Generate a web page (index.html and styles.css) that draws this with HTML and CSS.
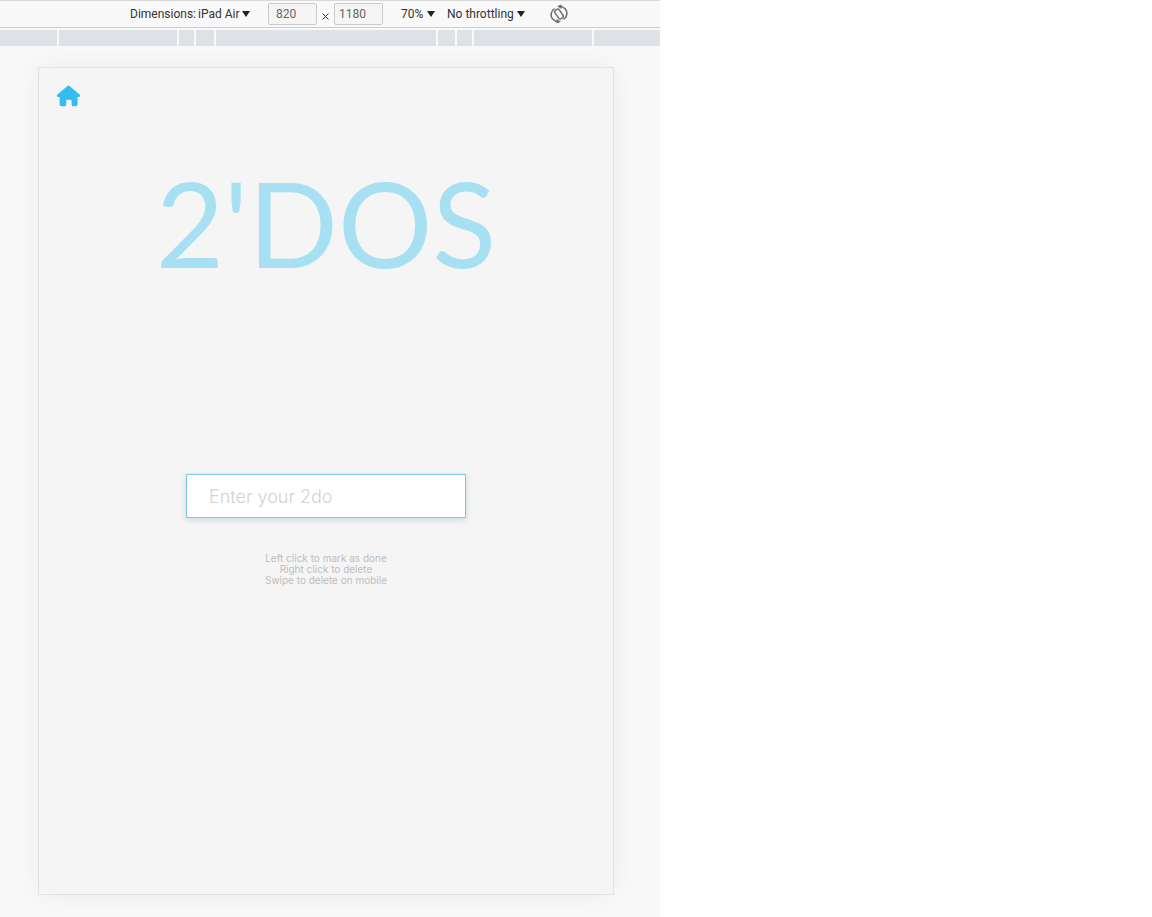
FILE: index.html
```html
<!DOCTYPE html>
<html lang="en">
<head>
<meta charset="utf-8">
<title>2'DOS</title>
<link rel="stylesheet" href="styles.css">
</head>
<body>
<div class="workspace">
  <section class="preview">
    <div class="toolbar">
      <label class="picker picker-device">Dimensions:
        <select><option>iPad Air</option></select>
        <svg class="caret" viewBox="0 0 8 6" aria-hidden="true"><path d="M0 0h8L4 6z"/></svg>
      </label>
      <div class="size">
        <input class="size-field size-width" type="text" value="820" aria-label="Width">
        <svg class="times" viewBox="0 0 7 7" role="img" aria-label="by"><path d="M.5.5l6 6M6.500.5l-6 6"/></svg>
        <input class="size-field" type="text" value="1180" aria-label="Height">
      </div>
      <label class="picker picker-zoom">
        <select aria-label="Zoom"><option>70%</option></select>
        <svg class="caret" viewBox="0 0 8 6" aria-hidden="true"><path d="M0 0h8L4 6z"/></svg>
      </label>
      <label class="picker picker-throttle">
        <select aria-label="Throttling"><option>No throttling</option></select>
        <svg class="caret" viewBox="0 0 8 6" aria-hidden="true"><path d="M0 0h8L4 6z"/></svg>
      </label>
      <button class="rotate" type="button" aria-label="Rotate">
        <svg viewBox="0 0 20 20" aria-hidden="true">
          <rect x="7.400" y="5" width="5.200" height="10" rx="1.800" transform="rotate(-35 10 10)"/>
          <path d="M10 2.200C15 2.200 18.600 6 17.800 10.500C17.400 12.800 16.300 14.200 14.500 15.500M10 17.800C5 17.800 1.400 14 2.200 9.500C2.600 7.200 3.700 5.800 5.500 4.500"/>
          <path class="tip" d="M8 2.200L12.500.6V5zM12 17.800L7.500 19.400V15z"/>
        </svg>
      </button>
    </div>
    <div class="ruler">
      <span></span><span></span><span></span><span></span><span></span><span></span><span></span><span></span><span></span>
    </div>
    <main class="device">
      <a class="home" href="#" aria-label="Home">
        <svg viewBox="0 0 26 22" aria-hidden="true"><path d="M11.900.6Q13-.4 14.100.6L24.800 9.800Q25.800 11.500 24.200 12H22.400V19.800Q22.400 21.600 20.600 21.600H17.800Q16.200 21.600 16.200 20V16Q16.200 14.800 15 14.800H11.800Q10.600 14.800 10.600 16V20Q10.600 21.600 9 21.600H5.600Q3.800 21.600 3.800 19.800V12H1.800Q.2 11.500 1.200 9.800Z"/></svg>
      </a>
      <h1 class="title">2'DOS</h1>
      <input class="entry" type="text" placeholder="Enter your 2do" aria-label="New item">
      <p class="hints">Left click to mark as done<br>Right click to delete<br>Swipe to delete on mobile</p>
    </main>
  </section>
</div>
</body>
</html>
```

FILE: styles.css
```css
* {
  box-sizing: border-box;
}

body {
  margin: 0;
  background: #fff;
  font-family: Roboto, "Open Sans", sans-serif;
}

.workspace {
  display: grid;
  grid-template-columns: 55fr 41fr;
  min-height: 100vh;
}

.preview {
  display: flex;
  flex-direction: column;
  background: #f9f9f9;
}

.toolbar {
  display: flex;
  align-items: center;
  height: 28px;
  padding-left: 130px;
  border-top: 1px solid #d8d8d8;
  border-bottom: 1px solid #c9cbce;
  color: #333;
  font-size: 12px;
  white-space: nowrap;
}

.picker {
  display: flex;
  align-items: center;
  gap: 3px;
}

.picker select {
  appearance: none;
  padding: 0;
  border: 0;
  background: transparent;
  color: inherit;
  font: inherit;
}

.picker-device {
  gap: 2px;
}

.caret {
  width: 8px;
  height: 6px;
  fill: #222;
}

.size {
  display: flex;
  align-items: center;
  gap: 5px;
  margin: 0 18px;
}

.size-field {
  width: 49px;
  height: 22px;
  padding: 0 4px;
  border: 1px solid #cacaca;
  border-radius: 2px;
  background: #f5f5f5;
  color: #666;
  font: inherit;
}

.size-width {
  padding-left: 7px;
}

.times {
  width: 7px;
  height: 7px;
  margin-top: 4px;
  stroke: #333;
}

.picker-throttle {
  margin-left: 12px;
}

.rotate {
  display: flex;
  margin-left: 24px;
  padding: 0;
  border: 0;
  background: none;
}

.rotate svg {
  width: 20px;
  height: 20px;
  fill: none;
  stroke: #6e6e6e;
  stroke-width: 1.500;
}

.rotate .tip {
  fill: #6e6e6e;
  stroke: none;
}

.ruler {
  display: grid;
  grid-template-columns: 57fr 118fr 15fr 18fr 220fr 17fr 15fr 118fr 66fr;
  gap: 2px;
  height: 16px;
  margin-top: 2px;
}

.ruler span {
  background: #dee1e6;
}

.device {
  display: flex;
  flex: 1;
  flex-direction: column;
  align-items: center;
  margin: 21px 46px 22px 38px;
  padding: 17px;
  border: 1px solid #e2e2e2;
  background: #f5f5f5;
  box-shadow: 0 0 30px rgba(0, 0, 0, 0.06);
  font-family: Inter, sans-serif;
}

.home {
  align-self: flex-start;
  display: flex;
}

.home svg {
  width: 25px;
  height: 22px;
  fill: #34bdf0;
}

.title {
  margin: 50px 0 0;
  color: #a8e0f3;
  font-family: Lato, Inter, sans-serif;
  font-size: 118px;
  font-weight: 400;
  line-height: 132px;
}

.entry {
  width: 280px;
  max-width: 100%;
  height: 44px;
  margin: 185px 0 0;
  padding: 0 22px;
  border: 1px solid #7fc6e3;
  background: #fff;
  box-shadow: 0 2px 6px rgba(80, 140, 165, 0.25);
  font-family: inherit;
  font-size: 18px;
  font-weight: 300;
}

.entry::placeholder {
  color: #d2d2d2;
  opacity: 1;
}

.hints {
  margin: 35px 0 0;
  color: #bdbdbd;
  font-size: 10px;
  line-height: 11px;
  text-align: center;
}
```
